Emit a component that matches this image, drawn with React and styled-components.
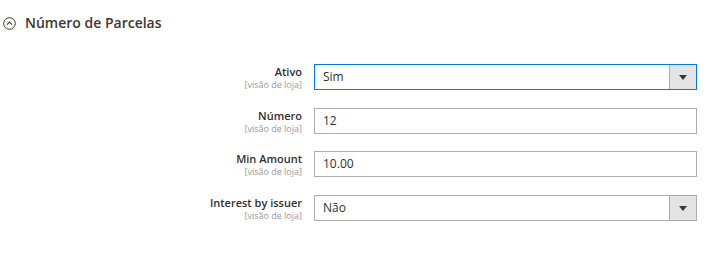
import React from 'react'
import styled, { createGlobalStyle } from 'styled-components'

const GlobalStyle = createGlobalStyle`
  html, body {
    margin: 0;
    padding: 0;
    background: #fff;
  }
  body {
    font-family: "Open Sans", "Liberation Sans", sans-serif;
    color: #303030;
  }
`

const Section = styled.section`
  width: 725px;
  height: 264px;
  box-sizing: border-box;
  padding-top: 13px;
`

const Header = styled.div`
  display: flex;
  align-items: center;
  gap: 9px;
  height: 20px;
  padding-left: 3px;
  color: #41362f;
  font-size: 14px;
  font-weight: 600;
  line-height: 20px;
`

const Toggle = styled.svg`
  width: 13px;
  height: 13px;
  flex: none;
`

const Rows = styled.div`
  display: grid;
  grid-template-columns: 302px 383px;
  column-gap: 12px;
  row-gap: 17.6px;
  padding-top: 31px;
`

const Label = styled.div`
  text-align: right;
  padding-top: 1px;
`

const LabelText = styled.div`
  font-size: 11px;
  font-weight: 600;
  line-height: 14px;
  color: #303030;
`

const Scope = styled.div`
  font-size: 9px;
  line-height: 11px;
  color: #999;
`

const Field = styled.div`
  display: flex;
  height: 26px;
  box-sizing: border-box;
  border: 1px solid ${p => (p.$focused ? '#007bdb' : '#adadad')};
  background: #fff;
`

const Value = styled.div`
  flex: 1;
  padding-left: 8px;
  font-size: 12px;
  line-height: 24px;
  color: #303030;
`

const Arrow = styled.div`
  width: 26px;
  flex: none;
  display: flex;
  align-items: center;
  justify-content: center;
  background: #e3e3e3;
  border-left: 1px solid #adadad;

  &::after {
    content: '';
    border-left: 4px solid transparent;
    border-right: 4px solid transparent;
    border-top: 5px solid #41362f;
    margin-top: 1px;
  }
`

const rows = [
  { label: 'Ativo', value: 'Sim', select: true, focused: true },
  { label: 'Número', value: '12' },
  { label: 'Min Amount', value: '10.00' },
  { label: 'Interest by issuer', value: 'Não', select: true },
]

const App = () => {
  return <>
    <GlobalStyle />
    <Section>
      <Header>
        <Toggle viewBox="0 0 13 13">
          <circle cx="6.5" cy="6.5" r="5.8" fill="none" stroke="#41362f" strokeWidth="1" />
          <path d="M4 7.6 L6.5 5.1 L9 7.6" fill="none" stroke="#41362f" strokeWidth="1.1" />
        </Toggle>
        Número de Parcelas
      </Header>
      <Rows>
        {rows.map(r => (
          <React.Fragment key={r.label}>
            <Label>
              <LabelText>{r.label}</LabelText>
              <Scope>[visão de loja]</Scope>
            </Label>
            <Field $focused={r.focused}>
              <Value>{r.value}</Value>
              {r.select && <Arrow />}
            </Field>
          </React.Fragment>
        ))}
      </Rows>
    </Section>
  </>
}

export default App
